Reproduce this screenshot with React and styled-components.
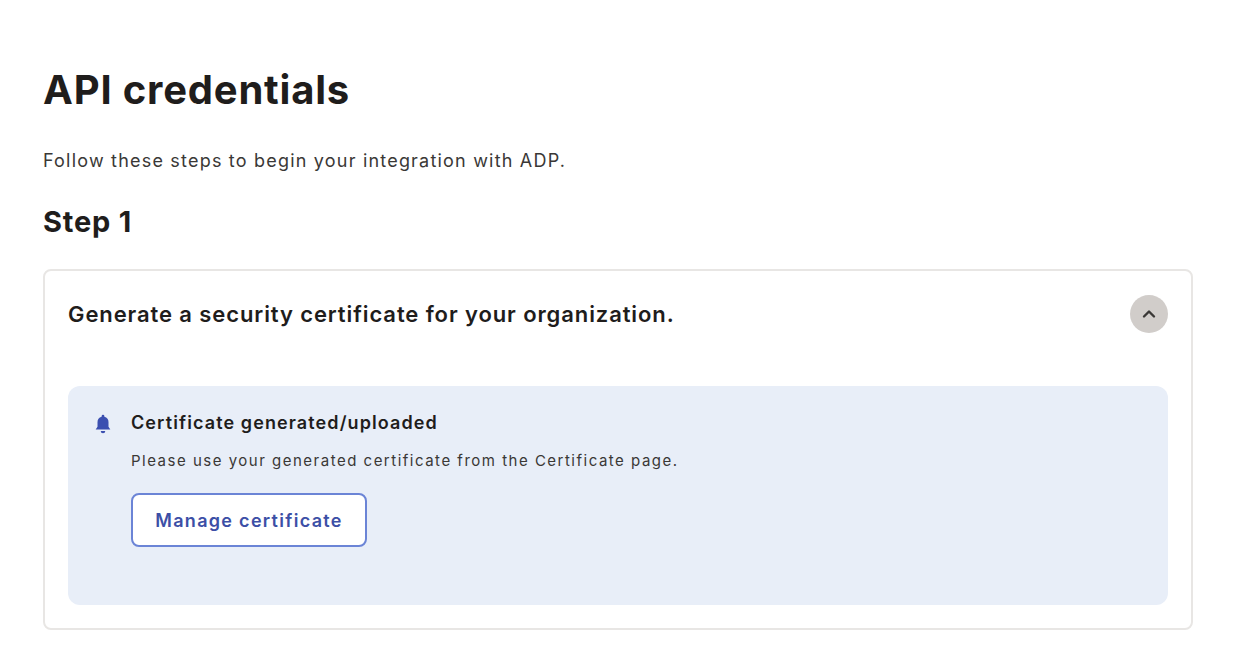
import React from "react";
import styled, { createGlobalStyle } from "styled-components";

const Global = createGlobalStyle`
  body { margin: 0; background: #fff; font-family: Inter, "Noto Sans", sans-serif; color: #1f1d1c; }
`;

const Page = styled.div`
  padding: 66px 61px 0 43px;
  display: flex;
  flex-direction: column;
`;
const Title = styled.h1`
  margin: 0;
  font-size: 40px;
  font-weight: 700;
  line-height: 48px;
  letter-spacing: 0.8px;
`;
const Sub = styled.p`
  margin: 35px 0 0;
  font-size: 18px;
  line-height: 24px;
  letter-spacing: 1.2px;
  color: #3a3836;
`;
const Step = styled.h2`
  margin: 32px 0 0;
  font-size: 29px;
  font-weight: 700;
  line-height: 34px;
  letter-spacing: 0.8px;
`;
const Card = styled.div`
  margin-top: 30px;
  border: 2px solid #e8e6e4;
  border-radius: 8px;
  padding: 24px 23px 23px 23px;
`;
const Header = styled.div`
  display: flex;
  justify-content: space-between;
  align-items: center;
`;
const HeaderText = styled.div`
  font-size: 22px;
  font-weight: 600;
  letter-spacing: 0.9px;
`;
const Toggle = styled.div`
  width: 38px;
  height: 38px;
  border-radius: 50%;
  background: #d1cdca;
  display: flex;
  align-items: center;
  justify-content: center;
`;
const Alert = styled.div`
  margin-top: 53px;
  background: #e8eef8;
  border-radius: 12px;
  padding: 25px 24px 58px 24px;
  display: flex;
  gap: 17px;
`;
const AlertBody = styled.div`
  display: flex;
  flex-direction: column;
`;
const AlertTitle = styled.div`
  font-size: 18px;
  font-weight: 600;
  line-height: 24px;
  letter-spacing: 1.1px;
`;
const AlertText = styled.div`
  margin-top: 16px;
  font-size: 15px;
  line-height: 20px;
  letter-spacing: 1.5px;
  color: #3a3836;
`;
const Button = styled.button`
  margin-top: 22px;
  align-self: flex-start;
  width: 236px;
  height: 54px;
  border: 2px solid #6b84d6;
  border-radius: 8px;
  background: #fff;
  color: #3c4fa6;
  font-family: inherit;
  font-size: 18px;
  font-weight: 600;
  letter-spacing: 1.3px;
`;

export default function App() {
  return (
    <>
      <Global />
      <Page>
        <Title>API credentials</Title>
        <Sub>Follow these steps to begin your integration with ADP.</Sub>
        <Step>Step 1</Step>
        <Card>
          <Header>
            <HeaderText>Generate a security certificate for your organization.</HeaderText>
            <Toggle>
              <svg width="14" height="10" viewBox="0 0 14 10" fill="none">
                <path d="M2 7.5 7 2.5l5 5" stroke="#3a3836" strokeWidth="2.4" strokeLinecap="round" strokeLinejoin="round" />
              </svg>
            </Toggle>
          </Header>
          <Alert>
            <svg width="22" height="24" viewBox="0 0 24 24" style={{ marginTop: 1 }}>
              <path d="M12 2a1.5 1.5 0 0 1 1.5 1.5v.6A6 6 0 0 1 18 10v5l2 3H4l2-3v-5a6 6 0 0 1 4.5-5.9v-.6A1.5 1.5 0 0 1 12 2zm-2.5 17.5h5a2.5 2.5 0 0 1-5 0z" fill="#3b4fb0" />
            </svg>
            <AlertBody>
              <AlertTitle>Certificate generated/uploaded</AlertTitle>
              <AlertText>Please use your generated certificate from the Certificate page.</AlertText>
              <Button>Manage certificate</Button>
            </AlertBody>
          </Alert>
        </Card>
      </Page>
    </>
  );
}
